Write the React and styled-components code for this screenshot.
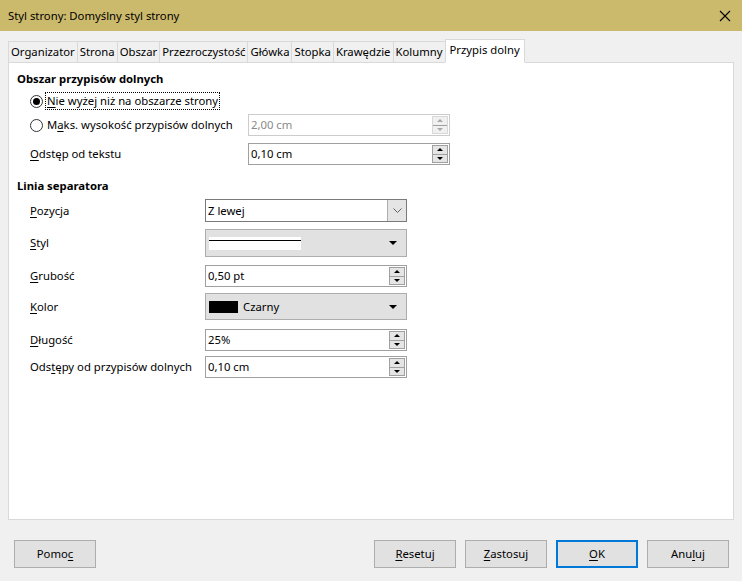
import React from "react";
import styled, { createGlobalStyle } from "styled-components";

const Global = createGlobalStyle`
  html, body { margin: 0; padding: 0; background: #f0f0f0; }
  body { font-family: "Noto Sans", "Open Sans", sans-serif; font-size: 11.3px; color: #000; }
  u { text-decoration: underline; text-underline-offset: 2px; }
`;

const Window = styled.div`
  width: 742px;
  height: 581px;
  display: flex;
  flex-direction: column;
  background: #f0f0f0;
  overflow: hidden;
`;

const TitleBar = styled.div`
  height: 31px;
  flex: none;
  background: #ccba6c;
  display: flex;
  align-items: center;
  justify-content: space-between;
  padding: 0 8px 0 8px;
`;

const Title = styled.span`
  line-height: 16px;
`;

const Close = styled.div`
  width: 12px;
  height: 12px;
  margin-right: 3px;
  display: flex;
`;

const Body = styled.div`
  flex: 1;
  display: flex;
  flex-direction: column;
  padding: 8px 8px 0 8px;
`;

const TabStrip = styled.div`
  display: flex;
  align-items: flex-end;
  height: 24px;
  position: relative;
  z-index: 1;
  margin-bottom: -1px;
`;

const Tab = styled.div`
  height: ${(p) => (p.$active ? "24px" : "22px")};
  box-sizing: border-box;
  padding: 0 ${(p) => (p.$active ? "4px" : "2px")};
  margin-left: ${(p) => (p.$first ? "0" : "-1px")};
  border: 1px solid #d9d9d9;
  border-bottom: ${(p) => (p.$active ? "1px solid #fff" : "1px solid #d9d9d9")};
  background: ${(p) => (p.$active ? "#fff" : "#f0f0f0")};
  display: flex;
  align-items: center;
  white-space: nowrap;
  line-height: 16px;
  padding-bottom: ${(p) => (p.$active ? "2px" : "0")};
`;

const Panel = styled.div`
  width: 726px;
  height: 458px;
  box-sizing: border-box;
  background: #fff;
  border: 1px solid #d9d9d9;
  padding: 8px 0 0 8px;
  display: flex;
  flex-direction: column;
`;

const Heading = styled.div`
  font-weight: bold;
  line-height: 16px;
  height: 16px;
  margin-top: ${(p) => p.$mt || 0}px;
`;

const Row = styled.div`
  display: flex;
  align-items: center;
  height: ${(p) => p.$h}px;
  margin-top: ${(p) => p.$mt}px;
  padding-left: 13px;
`;

const Label = styled.div`
  width: ${(p) => p.$w}px;
  flex: none;
  line-height: 16px;
  white-space: nowrap;
`;

const RadioLabel = styled.label`
  display: flex;
  align-items: center;
  width: ${(p) => p.$w}px;
  flex: none;
  white-space: nowrap;
  line-height: 16px;
`;

const RadioCircle = styled.span`
  width: 13px;
  height: 13px;
  box-sizing: border-box;
  border: 1px solid #333;
  border-radius: 50%;
  background: #fff;
  display: flex;
  align-items: center;
  justify-content: center;
  margin-right: 2px;
  flex: none;
  &::after {
    content: "";
    width: 7px;
    height: 7px;
    border-radius: 50%;
    background: ${(p) => (p.$checked ? "#000" : "transparent")};
  }
`;

const RadioText = styled.span`
  padding: 0 1px;
  border: 1px dotted ${(p) => (p.$focus ? "#000" : "transparent")};
`;

const Field = styled.div`
  width: 202px;
  height: 100%;
  box-sizing: border-box;
  border: 1px solid ${(p) => (p.$disabled ? "#cccccc" : "#a0a0a0")};
  background: #fff;
  display: flex;
  align-items: center;
  color: ${(p) => (p.$disabled ? "#8a8a8a" : "#000")};
  padding-left: 2px;
`;

const FieldText = styled.span`
  flex: 1;
  line-height: 16px;
`;

const Spin = styled.div`
  width: 16px;
  height: 18px;
  margin-right: 1px;
  box-sizing: border-box;
  border: 1px solid ${(p) => (p.$disabled ? "#d8d8d8" : "#a0a0a0")};
  background: ${(p) => (p.$disabled ? "#f0f0f0" : "#e5e5e5")};
  display: flex;
  flex-direction: column;
`;

const SpinHalf = styled.div`
  flex: 1;
  display: flex;
  align-items: center;
  justify-content: center;
  & + & { border-top: 1px solid ${(p) => (p.$disabled ? "#d8d8d8" : "#a0a0a0")}; }
`;

const Arrow = styled.span`
  width: 0;
  height: 0;
  border-left: 3px solid transparent;
  border-right: 3px solid transparent;
  ${(p) =>
    p.$up
      ? `border-bottom: 3px solid ${p.$disabled ? "#a8a8a8" : "#000"};`
      : `border-top: 3px solid ${p.$disabled ? "#a8a8a8" : "#000"};`}
`;

const Select = styled.div`
  width: 202px;
  height: 100%;
  box-sizing: border-box;
  border: 1px solid #7a7a7a;
  background: #fff;
  display: flex;
  align-items: stretch;
  padding-left: 2px;
`;

const SelectText = styled.span`
  flex: 1;
  align-self: center;
  line-height: 16px;
`;

const SelectButton = styled.div`
  width: 18px;
  border-left: 1px solid #adadad;
  background: #e5e5e5;
  display: flex;
  align-items: center;
  justify-content: center;
`;

const Combo = styled.div`
  width: 202px;
  height: 100%;
  box-sizing: border-box;
  border: 1px solid #adadad;
  background: #e1e1e1;
  display: flex;
  align-items: center;
  padding: 0 9px 0 3px;
`;

const DropArrow = styled.span`
  margin-left: auto;
  width: 0;
  height: 0;
  border-left: 4px solid transparent;
  border-right: 4px solid transparent;
  border-top: 4px solid #000;
`;

const LinePreview = styled.div`
  width: 92px;
  height: 13px;
  background: #fff;
  display: flex;
  align-items: flex-start;
  padding-top: 3px;
  box-sizing: border-box;
  &::after {
    content: "";
    width: 100%;
    height: 1px;
    background: #000;
  }
`;

const Swatch = styled.span`
  width: 29px;
  height: 12px;
  background: #000;
  margin-right: 5px;
`;

const Footer = styled.div`
  display: flex;
  align-items: flex-start;
  padding: 20px 5px 0 6px;
  gap: 9px;
`;

const Button = styled.div`
  width: 82px;
  height: 28px;
  box-sizing: border-box;
  border: ${(p) => (p.$default ? "2px solid #0078d7" : "1px solid #adadad")};
  background: #e1e1e1;
  display: flex;
  align-items: center;
  justify-content: center;
  line-height: 16px;
  margin-left: ${(p) => p.$ml || 0}px;
`;

const SpinBox = ({ value, disabled }) => (
  <Field $disabled={disabled}>
    <FieldText>{value}</FieldText>
    <Spin $disabled={disabled}>
      <SpinHalf $disabled={disabled}><Arrow $up $disabled={disabled} /></SpinHalf>
      <SpinHalf $disabled={disabled}><Arrow $disabled={disabled} /></SpinHalf>
    </Spin>
  </Field>
);

const tabs = [
  "Organizator", "Strona", "Obszar", "Przezroczystość", "Główka",
  "Stopka", "Krawędzie", "Kolumny", "Przypis dolny",
];

export default function App() {
  return (
    <Window>
      <Global />
      <TitleBar>
        <Title>Styl strony: Domyślny styl strony</Title>
        <Close>
          <svg width="12" height="12" viewBox="0 0 12 12">
            <path d="M1 1 L11 11 M11 1 L1 11" stroke="#000" strokeWidth="1.1" />
          </svg>
        </Close>
      </TitleBar>
      <Body>
        <TabStrip>
          {tabs.map((t, i) => (
            <Tab key={t} $first={i === 0} $active={i === tabs.length - 1}>{t}</Tab>
          ))}
        </TabStrip>
        <Panel>
          <Heading>Obszar przypisów dolnych</Heading>
          <Row $h={16} $mt={6}>
            <RadioLabel $w={218}>
              <RadioCircle $checked />
              <RadioText $focus><u>N</u>ie wyżej niż na obszarze strony</RadioText>
            </RadioLabel>
          </Row>
          <Row $h={22} $mt={5}>
            <RadioLabel $w={218}>
              <RadioCircle />
              <RadioText>M<u>a</u>ks. wysokość przypisów dolnych</RadioText>
            </RadioLabel>
            <SpinBox value="2,00 cm" disabled />
          </Row>
          <Row $h={22} $mt={7}>
            <Label $w={218}><u>O</u>dstęp od tekstu</Label>
            <SpinBox value="0,10 cm" />
          </Row>

          <Heading $mt={13}>Linia separatora</Heading>
          <Row $h={23} $mt={5}>
            <Label $w={175}><u>P</u>ozycja</Label>
            <Select>
              <SelectText>Z lewej</SelectText>
              <SelectButton>
                <svg width="9" height="6" viewBox="0 0 9 6">
                  <path d="M0.5 0.5 L4.5 4.5 L8.5 0.5" fill="none" stroke="#606060" strokeWidth="1" />
                </svg>
              </SelectButton>
            </Select>
          </Row>
          <Row $h={28} $mt={7}>
            <Label $w={175}><u>S</u>tyl</Label>
            <Combo>
              <LinePreview />
              <DropArrow />
            </Combo>
          </Row>
          <Row $h={22} $mt={8}>
            <Label $w={175}><u>G</u>rubość</Label>
            <SpinBox value="0,50 pt" />
          </Row>
          <Row $h={27} $mt={6}>
            <Label $w={175}><u>K</u>olor</Label>
            <Combo>
              <Swatch />
              <span>Czarny</span>
              <DropArrow />
            </Combo>
          </Row>
          <Row $h={22} $mt={9}>
            <Label $w={175}><u>D</u>ługość</Label>
            <SpinBox value="25%" />
          </Row>
          <Row $h={22} $mt={5}>
            <Label $w={175}>Ods<u>t</u>ępy od przypisów dolnych</Label>
            <SpinBox value="0,10 cm" />
          </Row>
        </Panel>
        <Footer>
          <Button>Pomo<u>c</u></Button>
          <Button $ml={269}><u>R</u>esetuj</Button>
          <Button><u>Z</u>astosuj</Button>
          <Button $default><u>O</u>K</Button>
          <Button>Anu<u>l</u>uj</Button>
        </Footer>
      </Body>
    </Window>
  );
}
